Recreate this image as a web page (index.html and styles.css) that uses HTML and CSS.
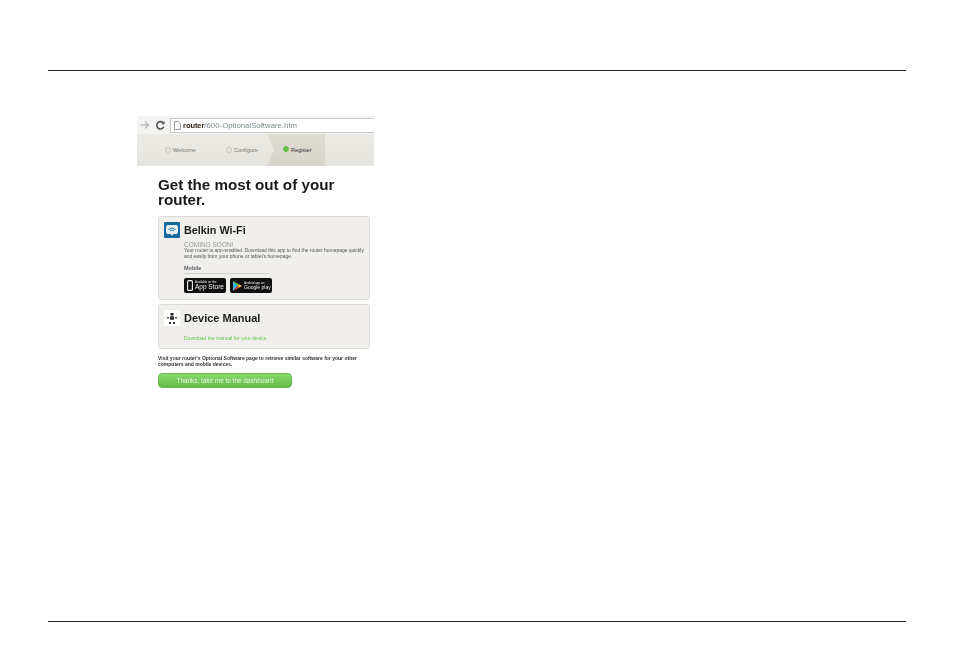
FILE: index.html
```html
<!DOCTYPE html>
<html lang="en">
<head>
    <meta charset="UTF-8">
    <title>Get the most out of your router</title>
    <link rel="stylesheet" href="styles.css">
</head>
<body>
    <div class="page">
        <hr class="rule">
        <div class="main">
            <div class="shot">
                <div class="toolbar">
                    <svg class="nav-icon" width="12" height="12" viewBox="0 0 12 12"><path d="M1.5 6h8M6 2.5 9.5 6 6 9.5" fill="none" stroke="#bdbdbd" stroke-width="1.500"/></svg>
                    <svg class="nav-icon" width="11" height="11" viewBox="0 0 12 12"><path d="M9.6 7.4A4 4 0 1 1 8.8 3" fill="none" stroke="#555" stroke-width="1.800"/><path d="M10.4 1v3.6H6.8z" fill="#555"/></svg>
                    <div class="address">
                        <svg width="7" height="9" viewBox="0 0 8 10"><path d="M.5.5h4.5l2.500 2.500v6.500h-7z" fill="#fff" stroke="#8a8a8a"/></svg>
                        <span class="host">router</span><span class="path">/600-OptionalSoftware.htm</span>
                    </div>
                </div>
                <div class="steps">
                    <div class="step step-one"><span class="dot"></span>Welcome</div>
                    <div class="step step-two"><span class="dot"></span>Configure</div>
                    <div class="step step-active"><span class="dot dot-on"></span>Register</div>
                </div>
                <div class="content">
                    <h1>Get the most out of your router.</h1>

                    <div class="card card-app">
                        <div class="card-head">
                            <div class="app-icon">
                                <svg width="12" height="11" viewBox="0 0 12 11"><path d="M2 0h8a2 2 0 0 1 2 2v5a2 2 0 0 1-2 2H7.500L6 11 4.500 9H2a2 2 0 0 1-2-2V2a2 2 0 0 1 2-2z" fill="#e8f1f6"/><path d="M2.500 4.500Q6 1.500 9.500 4.500M4 5.800Q6 4.200 8 5.800" fill="none" stroke="#2a78a5"/></svg>
                            </div>
                            <h2>Belkin Wi-Fi</h2>
                        </div>
                        <div class="card-body">
                            <div class="soon">COMING SOON!</div>
                            <p>Your router is app-enabled. Download this app to find the router homepage quickly and easily from your phone or tablet's homepage.</p>
                            <div class="mobile">Mobile</div>
                            <div class="badges">
                                <div class="badge">
                                    <svg width="6" height="11" viewBox="0 0 6 11"><rect x=".6" y=".6" width="4.800" height="9.800" rx="1" fill="none" stroke="#eee" stroke-width="1.100"/></svg>
                                    <div class="badge-text"><small>Available on the</small><span>App Store</span></div>
                                </div>
                                <div class="badge">
                                    <svg width="9" height="10" viewBox="0 0 9 10"><path d="M0 0 4.500 5 0 10z" fill="#35b8e8"/><path d="M0 0 6.500 3.400 4.500 5z" fill="#6cc04a"/><path d="M0 10 6.500 6.600 4.500 5z" fill="#e2483d"/><path d="M6.500 3.400 9 5 6.500 6.600 4.500 5z" fill="#f5c231"/></svg>
                                    <div class="badge-text"><small>Android app on</small><span class="play">Google play</span></div>
                                </div>
                            </div>
                        </div>
                    </div>

                    <div class="card card-manual">
                        <div class="card-head">
                            <div class="app-icon icon-manual">
                                <svg width="12" height="11" viewBox="0 0 12 11"><rect x="4.500" y="0" width="3" height="2.500" fill="#222"/><rect x="4" y="3.300" width="4" height="3.500" fill="#333"/><rect x="1" y="4" width="2" height="1.500" fill="#555"/><rect x="9" y="4" width="2" height="1.500" fill="#555"/><rect x="3" y="9" width="2" height="2" fill="#333"/><rect x="7" y="9" width="2" height="2" fill="#333"/></svg>
                            </div>
                            <h2>Device Manual</h2>
                        </div>
                        <div class="manual-link">Download the manual for your device.</div>
                    </div>

                    <p class="visit">Visit your router's Optional Software page to retrieve similar software for your other computers and mobile devices.</p>
                    <div class="cta">Thanks, take me to the dashboard</div>
                </div>
            </div>
        </div>
        <hr class="rule">
    </div>
</body>
</html>
```

FILE: styles.css
```css
html, body { margin: 0; background: #fff; }
body { font-family: "Liberation Sans", Arial, sans-serif; color: #1c1c1c; }
.page { width: 858px; height: 668px; margin: 0 0 0 48px; padding-top: 70px; box-sizing: border-box; }
.rule { margin: 0; border: none; border-top: 1px solid #231f20; }
.main { height: 550px; padding: 45px 0 0 89px; box-sizing: border-box; }

/* the reference is a scaled down screenshot, hence the slight blur */
.shot { width: 237px; height: 274px; display: flex; flex-direction: column; filter: blur(0.3px); }

.toolbar { height: 18px; display: flex; align-items: center; gap: 3px; padding-left: 2px; background: #f3f3f1; box-sizing: border-box; }
.nav-icon { flex: none; margin-right: 1px; }
.address { flex: 1; height: 15px; margin-left: 0; padding-left: 3px; display: flex; align-items: center; background: #fff; border: 1px solid #c9c9c9; border-right: none; font-size: 7.800px; box-sizing: border-box; }
.address svg { margin-right: 2px; }
.host { color: #2e2110; font-weight: bold; font-size: 7.400px; }
.path { color: #7d8a8e; }

.steps { height: 32px; display: flex; align-items: center; position: relative; background: linear-gradient(#ecebe6, #e5e3dd); font-size: 5.500px; color: #77776f; }
.step { display: flex; align-items: center; gap: 2px; }
.step-one { margin-left: 28px; width: 61px; }
.step-two { width: 41px; }
.step-active { height: 100%; width: 58px; padding-left: 16px; box-sizing: border-box; color: #333; background: linear-gradient(#dedbd3, #d8d5cc); clip-path: polygon(0 0, 100% 0, 100% 100%, 0 100%, 7px 50%); }
.dot { width: 4px; height: 4px; border: 1px solid #c8c8c0; border-radius: 50%; flex: none; }
.dot-on { background: #6cc04a; border-color: #6cc04a; margin-top: -3px; }

.content { padding: 11px 5px 0 21px; }
h1 { margin: 0; font-size: 15.200px; line-height: 15px; font-weight: bold; color: #1a1a1a; width: 195px; }

.card { width: 212px; margin-top: 4px; background: #f0efeb; border: 1px solid #dcdbd6; border-radius: 3px; box-sizing: border-box; }
.card-app { height: 84px; margin-top: 9px; }
.card-manual { height: 45px; }
.card-head { display: flex; align-items: center; gap: 4px; padding: 5px 0 0 5px; }
.app-icon { width: 16px; height: 16px; display: flex; align-items: center; justify-content: center; background: #146a9c; border-radius: 1px; }
.icon-manual { background: #fff; }
h2 { margin: 0; font-size: 10.800px; font-weight: bold; color: #1d1d1d; }
.card-manual h2 { font-size: 11px; }

.card-body { padding: 4px 0 0 25px; }
.soon { font-size: 6.500px; line-height: 6px; color: #9a9a92; }
.card-body p { margin: 0; font-size: 4.950px; line-height: 6px; color: #55554f; }
.mobile { width: 86px; margin-top: 5px; padding-bottom: 2px; font-size: 5.500px; font-weight: bold; color: #5b5b62; border-bottom: 1px solid #d5d4cf; }
.badges { display: flex; gap: 4px; margin-top: 4px; }
.badge { width: 42px; height: 15px; display: flex; align-items: center; gap: 2px; padding-left: 3px; background: #0f0f0f; border-radius: 2px; color: #eee; box-sizing: border-box; overflow: hidden; }
.badge svg { flex: none; }
.badge-text { display: flex; flex-direction: column; line-height: 1; white-space: nowrap; }
.badge-text small { font-size: 3px; }
.badge-text span { font-size: 6.500px; }
.badge-text .play { font-size: 5px; }

.manual-link { margin: 9px 0 0 25px; font-size: 5px; color: #6fc24f; }
.visit { margin: 6px 0 0; width: 205px; font-size: 5px; line-height: 6px; font-weight: bold; color: #333; }
.cta { width: 134px; height: 15px; margin-top: 6px; background: linear-gradient(#8ad96f, #62bb45); border: 1px solid #68b84e; border-radius: 4px; box-sizing: border-box; font-size: 6.400px; line-height: 13px; text-align: center; color: #e8f6df; }
```
